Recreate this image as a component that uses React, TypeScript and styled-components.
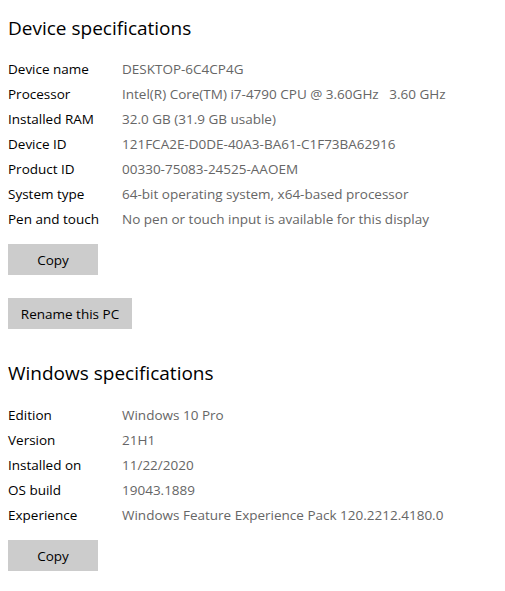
import React from 'react';
import styled, { createGlobalStyle } from 'styled-components';

const GlobalStyle = createGlobalStyle`
  body {
    margin: 0;
    background: #fff;
    font-family: "Open Sans", "Noto Sans", sans-serif;
    color: #000;
  }
`;

const Page = styled.div`
  padding: 14px 8px 0 8px;
`;

const Heading = styled.h2<{ $gap?: number }>`
  margin: ${p => p.$gap ?? 0}px 0 0 0;
  font-size: 19px;
  font-weight: 400;
  line-height: 28px;
  color: #000;
`;

const SpecGrid = styled.div<{ $gap: number }>`
  display: grid;
  grid-template-columns: 114px 1fr;
  grid-auto-rows: 25px;
  align-items: center;
  margin-top: ${p => p.$gap}px;
  font-size: 13.5px;
`;

const Label = styled.div`
  color: #000;
`;

const Value = styled.div`
  color: #666;
  white-space: pre;
`;

const Button = styled.button<{ $gap: number; $width: number }>`
  display: block;
  margin-top: ${p => p.$gap}px;
  width: ${p => p.$width}px;
  height: 31px;
  border: none;
  background: #ccc;
  color: #000;
  font-family: inherit;
  font-size: 13.5px;
  padding: 0;
  cursor: pointer;
`;

const device: [string, string][] = [
  ['Device name', 'DESKTOP-6C4CP4G'],
  ['Processor', 'Intel(R) Core(TM) i7-4790 CPU @ 3.60GHz   3.60 GHz'],
  ['Installed RAM', '32.0 GB (31.9 GB usable)'],
  ['Device ID', '121FCA2E-D0DE-40A3-BA61-C1F73BA62916'],
  ['Product ID', '00330-75083-24525-AAOEM'],
  ['System type', '64-bit operating system, x64-based processor'],
  ['Pen and touch', 'No pen or touch input is available for this display'],
];

const windows: [string, string][] = [
  ['Edition', 'Windows 10 Pro'],
  ['Version', '21H1'],
  ['Installed on', '11/22/2020'],
  ['OS build', '19043.1889'],
  ['Experience', 'Windows Feature Experience Pack 120.2212.4180.0'],
];

function Specs({ rows, gap }: { rows: [string, string][]; gap: number }) {
  return (
    <SpecGrid $gap={gap}>
      {rows.map(([k, v]) => (
        <React.Fragment key={k}>
          <Label>{k}</Label>
          <Value>{v}</Value>
        </React.Fragment>
      ))}
    </SpecGrid>
  );
}

export default function App() {
  return (
    <Page>
      <GlobalStyle />
      <Heading>Device specifications</Heading>
      <Specs rows={device} gap={14} />
      <Button $gap={13} $width={90}>Copy</Button>
      <Button $gap={23} $width={124}>Rename this PC</Button>
      <Heading $gap={30}>Windows specifications</Heading>
      <Specs rows={windows} gap={15} />
      <Button $gap={13} $width={90}>Copy</Button>
    </Page>
  );
}
